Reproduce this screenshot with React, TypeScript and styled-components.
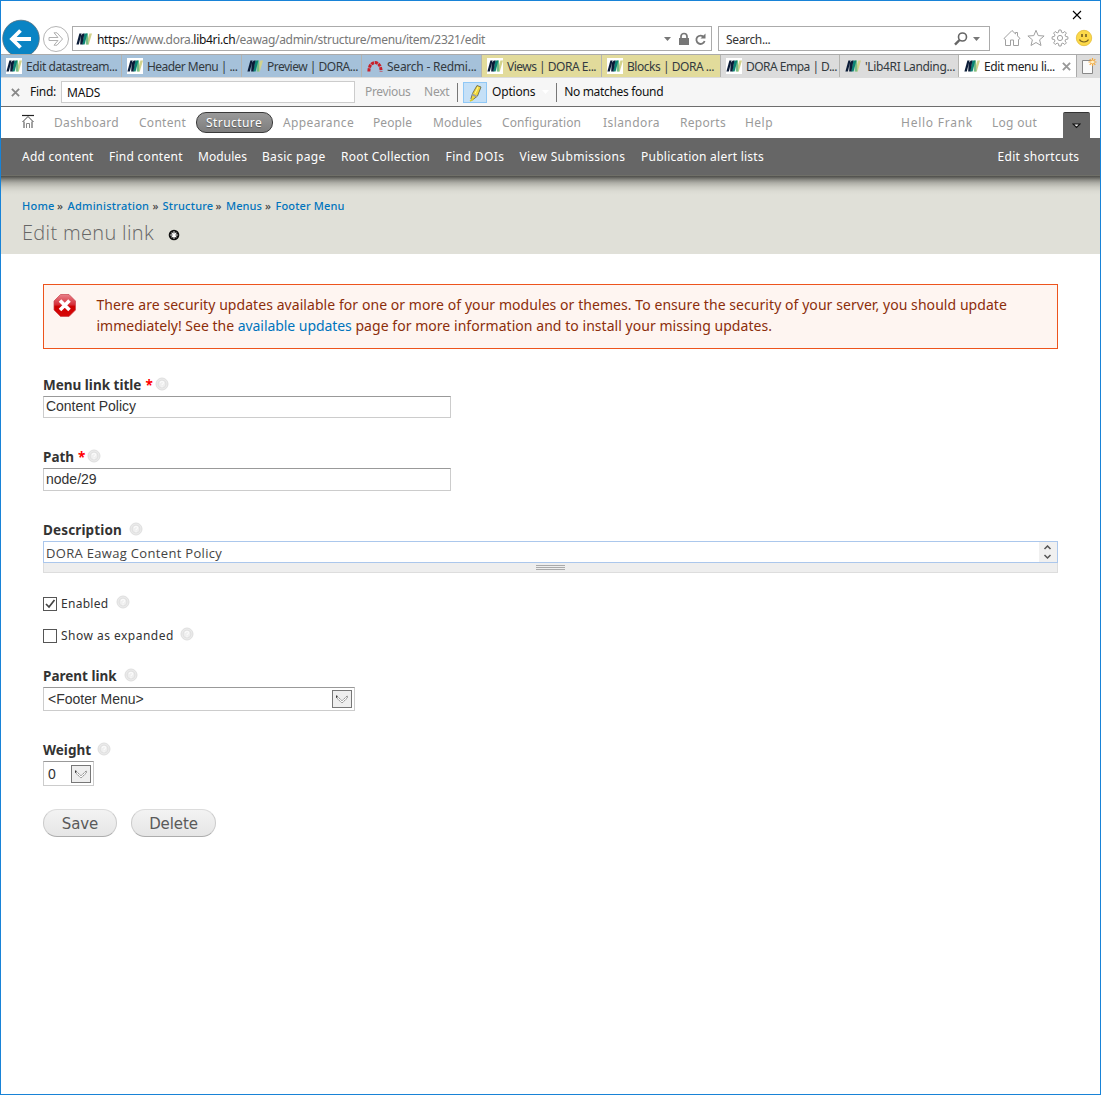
import React from "react";
import styled, { createGlobalStyle, css } from "styled-components";

const Global = createGlobalStyle`
  *, *::before, *::after { box-sizing: border-box; }
  body { margin: 0; background: #fff; }
  svg { display: block; flex: none; }
`;

const sans = `"Noto Sans", "Open Sans", sans-serif`;
const arial = `"Liberation Sans", Arial, sans-serif`;

const Window = styled.div`
  width: 1101px;
  height: 1095px;
  border: 1px solid #1883d7;
  background: #fff;
  font-family: ${sans};
  font-size: 12px;
  line-height: 16px;
  color: #333;
  overflow: hidden;
  display: flex;
  flex-direction: column;
`;

/* text run with its own tracking */
const Run = styled.span<{ $ls?: number }>`
  letter-spacing: ${(p) => p.$ls ?? 0}px;
  white-space: pre;
`;

/* ---------- browser chrome ---------- */
const TitleBar = styled.div`
  height: 18px;
  display: flex;
  justify-content: flex-end;
  padding: 9px 18px 0 0;
`;

const AddressRow = styled.div`
  height: 35px;
  display: flex;
  align-items: flex-start;
`;

const NavButtons = styled.div`
  width: 71px;
  height: 35px;
  overflow: hidden;
`;

const Field = styled.div<{ $w: number }>`
  width: ${(p) => p.$w}px;
  height: 25px;
  margin-top: 7px;
  border: 1px solid #ababab;
  display: flex;
  align-items: center;
  background: #fff;
`;

const AddressField = styled(Field)`
  padding: 0 4px 0 3px;
  color: #777;
`;

const SearchField = styled(Field)`
  margin-left: 6px;
  padding: 0 9px 0 7px;
  color: #333;
`;

const FieldText = styled.div`
  flex: 1;
  padding-top: 2px;
  b { font-weight: 400; color: #111; }
`;

const Url = styled(FieldText)`
  margin-left: 5px;
`;

const Tools = styled.div`
  display: flex;
  gap: 6px;
  align-items: center;
  margin: 10px 0 0 13px;
`;

const Tabs = styled.div`
  height: 24px;
  display: flex;
  border-top: 1px solid #ababab;
  background: #dcdcdc;
`;

const tones = { blue: "#a5c1da", gold: "#e2db9b", grey: "#dcdcdc", white: "#ffffff" };

const Tab = styled.div<{ $tone: keyof typeof tones; $w: number }>`
  width: ${(p) => p.$w}px;
  height: 22px;
  padding-left: 5px;
  display: flex;
  align-items: center;
  background: ${(p) => tones[p.$tone]};
  border-right: 1px solid ${(p) => (p.$tone === "white" ? "#ababab" : "#b4b4b0")};
  color: ${(p) => (p.$tone === "white" ? "#222" : "#333a40")};
  svg:first-child { margin-right: 4px; }
  > span { padding-top: 2px; }
`;

const TabClose = styled.div`
  margin-left: 7px;
`;

const NewTab = styled.div`
  padding: 1px 0 0 3px;
`;

const FindBar = styled.div`
  height: 29px;
  border-bottom: 1px solid #6d6d6d;
  background: #f6f6f6;
  display: flex;
  align-items: center;
  padding-left: 10px;
  color: #111;
`;

const FindInput = styled.div`
  width: 294px;
  height: 22px;
  margin: 0 10px 0 5px;
  padding: 3px 5px;
  border: 1px solid #ccc;
  background: #fff;
`;

const Muted = styled.div<{ $w: number }>`
  width: ${(p) => p.$w}px;
  color: #999;
`;

const Rule = styled.div`
  width: 1px;
  height: 19px;
  background: #777;
`;

const Marker = styled.div`
  width: 24px;
  height: 21px;
  margin: 0 5px;
  border: 1px solid #90c8f6;
  background: #c5e0f7;
  padding: 1px 0 0 3px;
`;

/* ---------- admin toolbar ---------- */
const AdminMenu = styled.nav`
  height: 31px;
  display: flex;
  align-items: center;
  padding-left: 20px;
  flex: none;
`;

const HomeSlot = styled.div`
  width: 33px;
  padding-bottom: 2px;
`;

const MenuItem = styled.div<{ $w: number }>`
  width: ${(p) => p.$w}px;
  color: #9a9a9a;
`;

const Pill = styled.div`
  width: 77px;
  height: 21px;
  border: 1px solid #3a3a3a;
  border-radius: 10px;
  background: linear-gradient(#9a9a9a, #7d7d7d);
  color: #fff;
  padding: 2px 0 0 9px;
  margin-right: 10px;
  text-shadow: 0 1px 1px #555;
`;

const Toggle = styled.div`
  width: 27px;
  height: 26px;
  margin: 5px 0 0;
  background: #666;
  border-top: 1px solid #333;
  border-radius: 2px 2px 0 0;
  padding: 10px 0 0 9px;
`;

const Shortcuts = styled.nav`
  height: 38px;
  flex: none;
  display: flex;
  background: #666;
  border-bottom: 1px solid #6f6f68;
  color: #fff;
  padding: 11px 0 0 21px;
`;

const Shortcut = styled.div<{ $w: number }>`
  width: ${(p) => p.$w}px;
`;

const PageHead = styled.header`
  height: 78px;
  flex: none;
  background: linear-gradient(#4d4d49 0, #6b6b66 2px, #8c8c86 4px, #afafa8 7px, #cacac2 11px, #dadad2 15px, #e0e0d8 19px);
  padding: 22px 0 0 21px;
`;

const Crumbs = styled.div`
  display: flex;
  height: 16px;
  font-size: 11px;
  font-weight: 500;
`;

const Crumb = styled.a<{ $w: number }>`
  width: ${(p) => p.$w}px;
  color: #0074bd;
`;

const Sep = styled.span<{ $w: number }>`
  width: ${(p) => p.$w}px;
  color: #444;
`;

const Title = styled.h1`
  margin: 5px 0 0;
  height: 28px;
  display: flex;
  gap: 14px;
  font: 300 20px/28px "Open Sans", sans-serif;
  color: #666;
  svg { margin-top: 10px; }
`;

/* ---------- page content ---------- */
const Content = styled.main`
  padding: 30px 42px 0;
  display: flex;
  flex-direction: column;
`;

const Alert = styled.div`
  height: 65px;
  border: 1px solid #ed541d;
  background: #fef5f1;
  color: #8c2e0b;
  display: flex;
  padding: 9px 0 0 9px;
  font-size: 14px;
  line-height: 21px;
  a { color: #0074bd; }
`;

const AlertText = styled.div`
  margin-left: 19.5px;
`;

const Label = styled.div<{ $top: number }>`
  margin-top: ${(p) => p.$top}px;
  height: 20px;
  display: flex;
  align-items: flex-start;
  font-size: 13.5px;
  font-weight: 700;
  line-height: 19px;
  svg { margin-top: 1px; }
`;

const Star = styled.span`
  color: #f00;
  margin: 0 2px 0 4px;
`;

const boxed = css`
  border: 1px solid #ccc;
  border-top-color: #999;
  background: #fff;
  font-family: ${arial};
  font-size: 14px;
  line-height: 18px;
  color: #333;
`;

const Input = styled.div<{ $h: number }>`
  ${boxed}
  width: 408px;
  height: ${(p) => p.$h}px;
  padding: ${(p) => p.$h - 22}px 2px 0;
`;

const TextArea = styled.div`
  height: 22px;
  border: 1px solid #abc7ec;
  display: flex;
  justify-content: space-between;
  padding-left: 2px;
  font: 13px/22px "Open Sans", sans-serif;
  color: #444;
`;

const Spinner = styled.div`
  width: 18px;
  background: #f0f0f0;
  padding: 3px 0 0 4px;
`;

const Grippie = styled.div`
  height: 10px;
  border: 1px solid #ddd;
  border-top: 0;
  background: #eee;
  display: flex;
  justify-content: center;
  padding-top: 2px;
`;

const GripLines = styled.div`
  width: 29px;
  height: 5px;
  border-top: 1px solid #aaa;
  border-bottom: 1px solid #aaa;
  background: linear-gradient(#eee 1px, #aaa 1px, #aaa 2px, #eee 2px);
`;

const CheckRow = styled.div<{ $top: number }>`
  margin-top: ${(p) => p.$top}px;
  height: 16px;
  display: flex;
  align-items: flex-start;
  font-size: 12px;
  line-height: 18px;
`;

const CheckBox = styled.div`
  width: 14px;
  height: 14px;
  border: 1px solid #555;
  background: #fff;
  margin: 2px 4px 0 0;
`;

const Select = styled.div<{ $w: number; $h: number }>`
  ${boxed}
  width: ${(p) => p.$w}px;
  height: ${(p) => p.$h}px;
  display: flex;
  justify-content: space-between;
  align-items: center;
  padding: 0 2px 0 4px;
`;

const DropButton = styled.div`
  width: 20px;
  height: 18px;
  border: 1px solid #777;
  background: #eee;
  padding: 4px 0 0 3px;
`;

const Actions = styled.div`
  display: flex;
  gap: 14px;
  margin-top: 23px;
`;

const Button = styled.div<{ $w: number }>`
  width: ${(p) => p.$w}px;
  height: 28px;
  border: 1px solid #cbcbcb;
  border-top-color: #dcdcdc;
  border-bottom-color: #adadad;
  border-radius: 14px;
  background: linear-gradient(#f3f3f3, #e6e6e6);
  color: #5a5a5a;
  font: 15px/28px "DejaVu Sans", sans-serif;
  letter-spacing: -0.1px;
  text-align: center;
`;

const HelpWrap = styled.span<{ $l?: number }>`
  margin: 0 0 0 ${(p) => p.$l ?? 0}px;
`;

/* ---------- drawings ---------- */
const Favicon = ({ tile = true }: { tile?: boolean }) => (
  <svg width="16" height="16" viewBox="0 0 16 16">
    {tile && <rect width="16" height="16" fill="#fff" />}
    <path d="M13.4 2.5H16L12.8 13.5H10.4Z" fill="#d3d28c" />
    <path d="M10 2.5h2L12.4 13.5H9.8Z" fill="#78bf86" />
    <path d="M8.4 2.5h3L8.6 13.500H6Z" fill="#0c8376" />
    <path d="M3.400 2.500h2.200L2.800 13.500H.4Z" fill="#0b1c38" />
    <path d="M6.800 2.500h1.700L6.400 13.500H4.200L4.600 5Z" fill="#0b1c38" />
  </svg>
);

const Redmine = () => (
  <svg width="16" height="16" viewBox="0 0 16 16" fill="none" stroke="#c8202a" strokeWidth="3">
    <path d="M1.9 13.500C1.900 8 4.500 4.600 8 4.600S14.100 8 14.100 13.500" strokeDasharray="3.2 .7" />
  </svg>
);

const Help = ({ left }: { left?: number }) => (
  <HelpWrap $l={left}>
    <svg width="14" height="14" viewBox="0 0 14 14">
      <circle cx="7" cy="7" r="6" fill="#eaeaea" stroke="#dfdfdf" />
      <circle cx="7" cy="7" r="3.9" fill="#efefef" stroke="#dcdcdc" strokeWidth=".8" />
      <path d="M5.4 6c0-2.300 3.300-2 3.200-.1C8.500 7 7 6.900 7 8.300M7 9.300v.9" fill="none" stroke="#fafafa" strokeWidth="1.2" />
    </svg>
  </HelpWrap>
);

const DropArrow = () => (
  <DropButton>
    <svg width="12" height="9" viewBox="0 0 12 9" fill="none">
      <path d="M.7.8V3L6 8l5.300-5V.8L6 5.800Z" fill="#fff" stroke="#777" strokeWidth=".8" strokeDasharray="2 .4" />
      <path d="M.7.500v2.300" stroke="#222" />
    </svg>
  </DropButton>
);

const Cross = ({ size, color, width }: { size: number; color: string; width: number }) => (
  <svg width={size} height={size} viewBox="0 0 10 10" fill="none" stroke={color} strokeWidth={width}>
    <path d="M1 1 9 9M9 1 1 9" />
  </svg>
);

const Triangle = ({ color }: { color: string }) => (
  <svg width="7" height="4" viewBox="0 0 7 4"><path d="M0 0h7L3.500 4Z" fill={color} /></svg>
);

const tabs: { t: string; tone: keyof typeof tones; w: number; ls: number; tile?: boolean; red?: boolean }[] = [
  { t: "Edit datastream...", tone: "blue", w: 121, ls: -0.42 },
  { t: "Header Menu | ...", tone: "blue", w: 120, ls: -0.54 },
  { t: "Preview | DORA...", tone: "blue", w: 120, ls: -0.5 },
  { t: "Search - Redmi...", tone: "blue", w: 120, ls: -0.24, red: true },
  { t: "Views | DORA E...", tone: "gold", w: 120, ls: -0.5 },
  { t: "Blocks | DORA ...", tone: "gold", w: 119, ls: -0.47 },
  { t: "DORA Empa | D...", tone: "grey", w: 119, ls: -0.51 },
  { t: "'Lib4RI Landing...", tone: "grey", w: 119, ls: -0.35, tile: false },
];
tabs[2].tile = false;

const menuBefore: [string, number, number][] = [["Dashboard", 85, 0.32], ["Content", 57, 0.27]];
const menuAfter: [string, number, number][] = [
  ["Appearance", 90, 0.37],
  ["People", 60, 0.08],
  ["Modules", 69, 0.06],
  ["Configuration", 101, 0.09],
  ["Islandora", 77, 0.43],
  ["Reports", 65, 0.3],
  ["Help", 156, 0.47],
  ["Hello Frank", 91, 0.75],
  ["Log out", 71, 0.28],
];

const shortcuts: [string, number, number][] = [
  ["Add content", 87, 0.26],
  ["Find content", 89, 0.27],
  ["Modules", 64, 0.06],
  ["Basic page", 79, 0.3],
  ["Root Collection", 104.5, 0.26],
  ["Find DOIs", 74, 0.4],
  ["View Submissions", 121.5, 0.36],
  ["Publication alert lists", 356.5, 0.26],
  ["Edit shortcuts", 90, 0.31],
];

export default function App() {
  return (
    <>
      <Global />
      <Window>
        <TitleBar><Cross size={10} color="#000" width={1.1} /></TitleBar>
        <AddressRow>
          <NavButtons>
            <svg width="71" height="38" viewBox="1 19 71 38" fill="none">
              <circle cx="21" cy="38.500" r="18.300" fill="#0a84c4" stroke="#55707f" strokeWidth=".8" />
              <path d="M31 39H13M20.500 30.500 12 39l8.500 8.500" stroke="#fff" strokeWidth="3.800" />
              <circle cx="56" cy="39" r="12.500" stroke="#b5b5b5" />
              <path d="M49 37.500h9l-4-4.700h3l5.500 6.200-5.500 6.200h-3l4-4.700h-9Z" stroke="#b0b0b0" />
            </svg>
          </NavButtons>
          <AddressField $w={640}>
            <Favicon tile={false} />
            <Url>
              <Run $ls={-0.315}><b>https:</b>//www.dora.<b>lib4ri.ch</b>/eawag/admin/structure/menu/item/2321/edit</Run>
            </Url>
            <Triangle color="#777" />
            <svg width="36" height="16" viewBox="0 0 36 16" fill="none">
              <path d="M8 7h10v7H8Z" fill="#777" />
              <path d="M10 8V5.500a3 3 0 0 1 6 0V8" stroke="#777" strokeWidth="1.700" />
              <path d="M33 6.300A4.200 4.200 0 1 0 33.600 10" stroke="#777" strokeWidth="1.800" />
              <path d="M34.500 2.500v5h-5Z" fill="#777" />
            </svg>
          </AddressField>
          <SearchField $w={272}>
            <FieldText><Run $ls={-0.35}>Search...</Run></FieldText>
            <svg width="14" height="14" viewBox="0 0 14 14" fill="none" stroke="#666">
              <circle cx="8.500" cy="5" r="4" strokeWidth="1.600" />
              <path d="M5.500 8 1 12.700" strokeWidth="2.400" />
            </svg>
            <svg width="5" height="4" />
            <Triangle color="#777" />
          </SearchField>
          <Tools>
            <svg width="18" height="18" viewBox="0 0 18 18" fill="none" stroke="#a0a0a0">
              <path d="M1 9.500 9 1.500l3.500 3.400V3.500h2v3.400L17 9.500 15.500 10.500V16.500h-5V11h-3v5.500h-5v-6Z" />
            </svg>
            <svg width="18" height="18" viewBox="0 0 18 18" fill="none" stroke="#a0a0a0">
              <path d="m9 1.300 2.200 5.300 5.900.4-4.500 3.800 1.400 5.700L9 13.500l-5 3 1.400-5.700L.9 7l5.900-.4Z" />
            </svg>
            <svg width="18" height="18" viewBox="0 0 18 18" fill="none" stroke="#a0a0a0">
              <path d="m7.500 3.300.4-2.300h2.200l.4 2.300 1.400.6 1.900-1.400 1.600 1.600L14 6l.6 1.400 2.300.5v2.200l-2.300.4L14 12l1.400 1.900-1.600 1.600-1.900-1.400-1.400.6-.4 2.300H7.900l-.4-2.300-1.400-.6-1.900 1.400-1.600-1.600L4 12l-.6-1.500-2.300-.4V7.900l2.300-.5L4 6 2.600 4.100l1.600-1.600 1.900 1.400Z" />
              <circle cx="9" cy="9" r="2.600" />
            </svg>
            <svg width="18" height="18" viewBox="0 0 18 18">
              <circle cx="9" cy="9" r="7.700" fill="#fcd94a" stroke="#e3bd38" strokeWidth=".8" />
              <path d="M7 5v3M11 5v3" stroke="#6b5520" strokeWidth="1.500" />
              <path d="M4.500 10.500C6 13.800 12 13.800 13.500 10.500" fill="none" stroke="#7b6320" strokeWidth="1.100" />
            </svg>
          </Tools>
        </AddressRow>
        <Tabs>
          {tabs.map((tab) => (
            <Tab key={tab.t} $tone={tab.tone} $w={tab.w}>
              {tab.red ? <Redmine /> : <Favicon tile={tab.tile !== false} />}
              <Run $ls={tab.ls}>{tab.t}</Run>
            </Tab>
          ))}
          <Tab $tone="white" $w={118}>
            <Favicon tile={false} />
            <Run $ls={-0.36}>Edit menu li...</Run>
            <TabClose><Cross size={9} color="#999" width={2.1} /></TabClose>
          </Tab>
          <NewTab>
            <svg width="18" height="20" viewBox="0 0 18 20">
              <path d="M2.500 4.500h10v13h-10Z" fill="#fafafa" stroke="#888" />
              <path d="M12.500 2v8M8.500 6h8M9.700 3.200l5.600 5.600M15.300 3.200 9.700 8.800" stroke="#f3a83c" strokeWidth="1.200" />
              <circle cx="12.500" cy="6" r="1.600" fill="#fff2c8" />
            </svg>
          </NewTab>
        </Tabs>
        <FindBar>
          <Cross size={9} color="#888" width={2} />
          <svg width="10" height="1" />
          <Run $ls={-0.25}>Find:</Run>
          <FindInput><Run $ls={-0.2}>MADS</Run></FindInput>
          <Muted $w={59}><Run $ls={-0.36}>Previous</Run></Muted>
          <Muted $w={33}><Run $ls={-0.3}>Next</Run></Muted>
          <Rule />
          <Marker>
            <svg width="17" height="18" viewBox="0 0 17 18">
              <path d="M10 1.500 14 3l-3.500 9-5 4-1.500-1.500 1.500-5Z" fill="#f3d83a" stroke="#6b6a4a" strokeWidth=".9" />
              <path d="M5.500 9.500 10.500 12l-1.300 1.300-4.300-1.800Z" fill="#9aa0a0" />
              <path d="m3 17 3.500-2" stroke="#d9c92a" strokeWidth="1.500" />
              <path d="m11 3-3 6.500" stroke="#fff79a" />
            </svg>
          </Marker>
          <Run $ls={-0.22}>Options</Run>
          <svg width="21" height="4" viewBox="0 0 21 4"><path d="M7 0h7l-3.500 4Z" fill="#fff" /></svg>
          <Rule />
          <svg width="7" height="1" />
          <Run $ls={-0.32}>No matches found</Run>
        </FindBar>

        <AdminMenu>
          <HomeSlot>
            <svg width="14" height="15" viewBox="0 0 14 15" fill="none" stroke="#444">
              <path d="M1 1.500h12" stroke="#222" strokeWidth="1.200" />
              <path d="M1.500 8 7 2.500 12.500 8M3 7.500v6.500M11 7.500v6.500" />
              <path d="M5.500 14v-4.500h3V14" stroke="#888" />
            </svg>
          </HomeSlot>
          {menuBefore.map(([t, w, ls]) => <MenuItem key={t} $w={w}><Run $ls={ls}>{t}</Run></MenuItem>)}
          <Pill><Run $ls={0.42}>Structure</Run></Pill>
          {menuAfter.map(([t, w, ls]) => <MenuItem key={t} $w={w}><Run $ls={ls}>{t}</Run></MenuItem>)}
          <Toggle>
            <svg width="9" height="6" viewBox="0 0 9 6"><path d="M1 1h7L4.500 4.500Z" fill="#fff" stroke="#111" strokeWidth="1.200" /></svg>
          </Toggle>
        </AdminMenu>
        <Shortcuts>
          {shortcuts.map(([t, w, ls]) => <Shortcut key={t} $w={w}><Run $ls={ls}>{t}</Run></Shortcut>)}
        </Shortcuts>

        <PageHead>
          <Crumbs>
            <Crumb $w={35}><Run $ls={0.25}>Home</Run></Crumb><Sep $w={10.5}>»</Sep>
            <Crumb $w={85}><Run $ls={0.24}>Administration</Run></Crumb><Sep $w={10}>»</Sep>
            <Crumb $w={53}><Run $ls={0.2}>Structure</Run></Crumb><Sep $w={10.5}>»</Sep>
            <Crumb $w={39}><Run $ls={0.09}>Menus</Run></Crumb><Sep $w={10.5}>»</Sep>
            <Crumb $w={72}><Run $ls={0.14}>Footer Menu</Run></Crumb>
          </Crumbs>
          <Title>
            <Run $ls={0.33}>Edit menu link</Run>
            <svg width="12" height="12" viewBox="0 0 12 12">
              <circle cx="6" cy="6" r="5.300" fill="#111" />
              <path d="M6 2.300v7.400M2.300 6h7.400M3.600 3.600l4.800 4.800M8.400 3.600l-4.800 4.800" stroke="#fff" strokeWidth="1.100" />
            </svg>
          </Title>
        </PageHead>

        <Content>
          <Alert>
            <svg width="24" height="24" viewBox="0 0 24 24">
              <defs>
                <linearGradient id="stop" x1="0" y1="0" x2="0" y2="1">
                  <stop offset="0" stopColor="#e8808a" />
                  <stop offset=".45" stopColor="#d6303a" />
                  <stop offset=".55" stopColor="#cc0000" />
                  <stop offset="1" stopColor="#d80808" />
                </linearGradient>
              </defs>
              <path d="M7.500 .5h8.500l6.500 6.500v9L16 22.500H7.500L1 16V7Z" fill="url(#stop)" stroke="#c9424a" strokeWidth=".7" />
              <path d="m7 6.500 9.500 9.500M16.500 6.500 7 16" stroke="#fff" strokeWidth="3.600" />
            </svg>
            <AlertText>
              <Run $ls={0.062}>There are security updates available for one or more of your modules or themes. To ensure the security of your server, you should update</Run>
              <br />
              <Run $ls={0}>immediately! See the </Run>
              <a><Run $ls={-0.06}>available updates</Run></a>
              <Run $ls={0.045}> page for more information and to install your missing updates.</Run>
            </AlertText>
          </Alert>

          <Label $top={27}><Run>Menu link title</Run><Star>*</Star><Help /></Label>
          <Input $h={22}><Run $ls={-0.02}>Content Policy</Run></Input>

          <Label $top={30}><Run>Path</Run><Star>*</Star><Help /></Label>
          <Input $h={23}><Run>node/29</Run></Input>

          <Label $top={30}><Run $ls={0.14}>Description</Run><Help left={7} /></Label>
          <TextArea>
            <Run $ls={0.32}>DORA Eawag Content Policy</Run>
            <Spinner>
              <svg width="9" height="15" viewBox="0 0 9 15" fill="none" stroke="#555" strokeWidth="1.500">
                <path d="M1.500 4 4.500 1 7.500 4M1.500 10l3 3 3-3" />
              </svg>
            </Spinner>
          </TextArea>
          <Grippie><GripLines /></Grippie>

          <CheckRow $top={22}>
            <CheckBox>
              <svg width="12" height="12" viewBox="0 0 12 12"><path d="m2 6 3 3 5.500-7" fill="none" stroke="#444" strokeWidth="1.700" /></svg>
            </CheckBox>
            <Run $ls={0.28}>Enabled</Run><Help left={8} />
          </CheckRow>
          <CheckRow $top={16}>
            <CheckBox />
            <Run $ls={0.48}>Show as expanded</Run><Help left={6} />
          </CheckRow>

          <Label $top={24}><Run>Parent link</Run><Help left={7} /></Label>
          <Select $w={312} $h={24}><Run>{"<Footer Menu>"}</Run><DropArrow /></Select>

          <Label $top={30}><Run>Weight</Run><Help left={6} /></Label>
          <Select $w={51} $h={25}><Run>0</Run><DropArrow /></Select>

          <Actions>
            <Button $w={74}>Save</Button>
            <Button $w={85}>Delete</Button>
          </Actions>
        </Content>
      </Window>
    </>
  );
}
